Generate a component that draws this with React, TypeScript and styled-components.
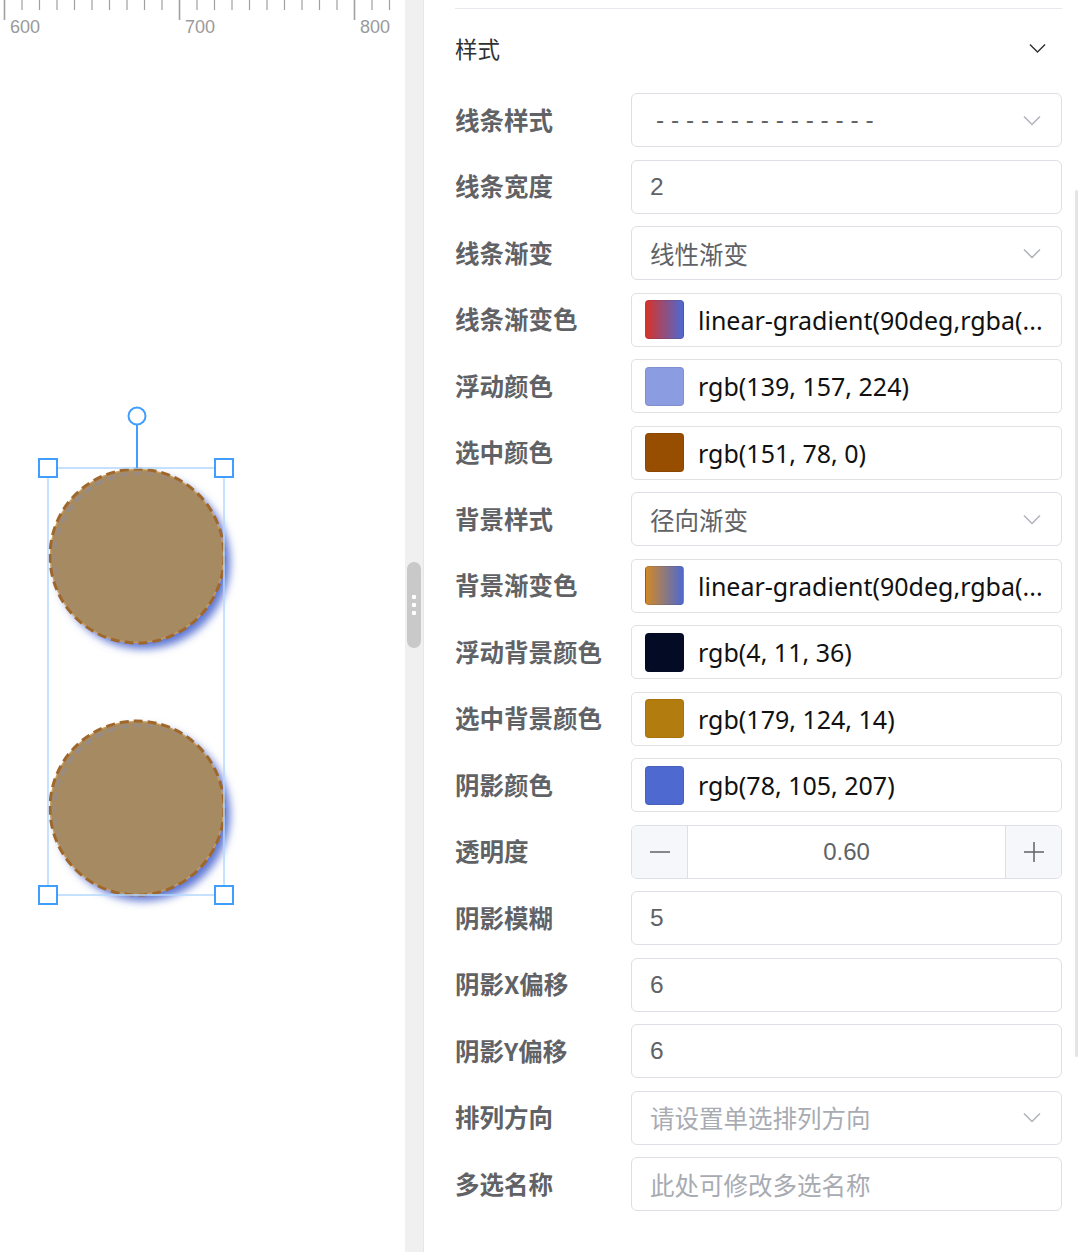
import React from "react";
import styled, { createGlobalStyle } from "styled-components";

const Global = createGlobalStyle`
  html, body { margin: 0; padding: 0; background: #fff; }
  body { font-family: "Liberation Sans", "Noto Sans CJK SC", sans-serif; }
  * { box-sizing: border-box; }
`;

const Page = styled.div`
  display: flex;
  width: 1079px;
  height: 1252px;
  overflow: hidden;
`;

const CanvasCol = styled.div`
  width: 405px;
  flex-shrink: 0;
  display: flex;
  flex-direction: column;
  background: #fff;
`;

const Stage = styled.div`
  position: relative;
  flex: 1;
`;

const ShapesLayer = styled.svg`
  position: absolute;
  left: 0;
  top: 0;
`;

const Splitter = styled.div`
  width: 19px;
  flex-shrink: 0;
  background: #f0f0f0;
  border-right: 1px solid #e6e6e6;
  display: flex;
  align-items: center;
  justify-content: center;
  padding-bottom: 42px;
`;

const Grip = styled.div`
  width: 14px;
  height: 86px;
  border-radius: 7px;
  background: #c9c9c9;
  display: flex;
  flex-direction: column;
  align-items: center;
  justify-content: center;
  gap: 4px;
`;

const GripDot = styled.span`
  width: 4px;
  height: 4px;
  border-radius: 1px;
  background: #fff;
`;

const Panel = styled.div`
  flex: 1;
  min-width: 0;
  display: flex;
  background: #fff;
`;

const PanelBody = styled.div`
  flex: 1;
  min-width: 0;
  padding: 8px 13px 0 31px;
`;

const ScrollTrack = styled.div`
  width: 4px;
  flex-shrink: 0;
  padding-top: 190px;
`;

const ScrollThumb = styled.div`
  width: 3px;
  height: 867px;
  background: #e4e4e4;
  border-radius: 2px;
`;

const SectionRule = styled.div`
  height: 1px;
  background: #e6e8ee;
`;

const SectionHeader = styled.div`
  height: 84px;
  display: flex;
  align-items: center;
  justify-content: space-between;
  padding: 0 16px 6px 0;
  font-family: "Noto Sans CJK SC", sans-serif;
  font-size: 22.5px;
  color: #303133;
`;

const Row = styled.div`
  display: flex;
  align-items: center;
  height: 54px;
  margin-bottom: 12.5px;
`;

const Label = styled.div`
  width: 176px;
  flex-shrink: 0;
  font-family: "Noto Sans CJK SC", sans-serif;
  font-weight: 700;
  font-size: 24.5px;
  color: #606266;
  padding-bottom: 2px;
`;

const Field = styled.div<{ $muted?: boolean }>`
  flex: 1;
  height: 54px;
  border: 1.5px solid #dcdfe6;
  border-radius: 6px;
  display: flex;
  align-items: center;
  padding: 0 20px 0 18px;
  font-family: "Liberation Sans", "Noto Sans CJK SC", sans-serif;
  font-size: 24.5px;
  color: ${(p) => (p.$muted ? "#a8abb2" : "#606266")};
  min-width: 0;
`;

const FieldText = styled.span<{ $indent?: number }>`
  flex: 1;
  padding-left: ${(p) => p.$indent ?? 0}px;
  white-space: nowrap;
  overflow: hidden;
  text-overflow: ellipsis;
`;

const ColorField = styled.div`
  flex: 1;
  height: 54px;
  border: 1.5px solid #e1e1e1;
  border-radius: 5px;
  display: flex;
  align-items: center;
  gap: 14px;
  padding: 0 12px 0 13px;
  min-width: 0;
`;

const Swatch = styled.div`
  width: 39px;
  height: 39px;
  border-radius: 4px;
  flex-shrink: 0;
  border: 1px solid rgba(0, 0, 0, 0.08);
`;

const ColorText = styled.span`
  flex: 1;
  min-width: 0;
  font-family: "Noto Sans", "Open Sans", sans-serif;
  font-size: 25px;
  color: #111;
  white-space: nowrap;
  overflow: hidden;
`;

const Stepper = styled.div`
  flex: 1;
  height: 54px;
  border: 1.5px solid #dcdfe6;
  border-radius: 6px;
  display: flex;
  overflow: hidden;
`;

const StepBtn = styled.div<{ $side: "l" | "r" }>`
  width: 56px;
  flex-shrink: 0;
  background: #f5f7fa;
  display: flex;
  align-items: center;
  justify-content: center;
  ${(p) => (p.$side === "l" ? "border-right: 1.5px solid #dcdfe6;" : "border-left: 1.5px solid #dcdfe6;")}
`;

const StepValue = styled.div`
  flex: 1;
  display: flex;
  align-items: center;
  justify-content: center;
  font-family: "Liberation Sans", sans-serif;
  font-size: 24px;
  color: #606266;
`;

const Chevron = ({ color, size = 18 }: { color: string; size?: number }) => (
  <svg width={size} height={size / 2 + 2} viewBox="0 0 18 11" fill="none">
    <path d="M1 1.5 L9 9.5 L17 1.5" stroke={color} strokeWidth="1.5" strokeLinejoin="round" />
  </svg>
);

const Ruler = () => {
  const ticks: React.ReactNode[] = [];
  for (let i = 0; i < 24; i++) {
    const x = 4.5 + i * 17.5;
    const major = i % 10 === 0;
    ticks.push(
      <line key={i} x1={x} x2={x} y1={0} y2={major ? 20 : 10} stroke="#a0a0a0" strokeWidth={major ? 1.6 : 1.2} />
    );
  }
  return (
    <svg width={405} height={40} style={{ display: "block" }}>
      {ticks}
      {[600, 700, 800].map((v, i) => (
        <text
          key={v}
          x={10 + i * 175}
          y={33}
          fontFamily="Liberation Sans, sans-serif"
          fontSize={18}
          fill="#9a9a9a"
        >
          {v}
        </text>
      ))}
    </svg>
  );
};

const Shapes = () => {
  const oy = -40;
  const circles = [556, 808];
  const handles: [number, number][] = [
    [48, 468],
    [224, 468],
    [48, 895],
    [224, 895],
  ];
  return (
    <ShapesLayer width={405} height={1212} viewBox={`0 ${-oy} 405 1212`}>
      <defs>
        <filter id="sh" x="-30%" y="-30%" width="160%" height="160%">
          <feDropShadow dx="6" dy="6" stdDeviation="4" floodColor="rgb(78,105,207)" floodOpacity="0.9" />
        </filter>
        <linearGradient id="inner" x1="0" y1="0" x2="1" y2="1">
          <stop offset="0" stopColor="#8c8ca6" stopOpacity="0.9" />
          <stop offset="0.45" stopColor="#8c8ca6" stopOpacity="0" />
        </linearGradient>
      </defs>
      {circles.map((cy) => (
        <g key={cy}>
          <circle cx={137} cy={cy} r={87} fill="#a68a62" filter="url(#sh)" />
          <circle cx={137} cy={cy} r={86.5} fill="none" stroke="#d1a45a" strokeWidth={1.5} opacity={0.7} />
          <circle cx={138.5} cy={cy + 1.5} r={84} fill="none" stroke="url(#inner)" strokeWidth={3} strokeDasharray="8 5" />
          <circle cx={137} cy={cy} r={87} fill="none" stroke="#9f672b" strokeWidth={3} strokeDasharray="9 5" />
        </g>
      ))}
      <rect x={48} y={468} width={176} height={427} fill="none" stroke="#b3d8ff" strokeWidth={1.5} />
      <line x1={137} x2={137} y1={425} y2={468} stroke="#409eff" strokeWidth={2} />
      <circle cx={137} cy={416} r={8.5} fill="#fff" stroke="#409eff" strokeWidth={2} />
      {handles.map(([x, y]) => (
        <rect key={`${x}-${y}`} x={x - 9} y={y - 9} width={18} height={18} fill="#fff" stroke="#409eff" strokeWidth={2} />
      ))}
    </ShapesLayer>
  );
};

type RowDef =
  | { label: string; kind: "select"; value: string; muted?: boolean; dashed?: boolean }
  | { label: string; kind: "input"; value: string; muted?: boolean }
  | { label: string; kind: "color"; value: string; swatch: string }
  | { label: string; kind: "stepper"; value: string };

const rows: RowDef[] = [
  { label: "线条样式", kind: "select", value: "- - - - - - - - - - - - - - -", dashed: true },
  { label: "线条宽度", kind: "input", value: "2" },
  { label: "线条渐变", kind: "select", value: "线性渐变" },
  {
    label: "线条渐变色",
    kind: "color",
    value: "linear-gradient(90deg,rgba(...",
    swatch: "linear-gradient(90deg, #d6342a 0%, #4e69cf 100%)",
  },
  { label: "浮动颜色", kind: "color", value: "rgb(139, 157, 224)", swatch: "rgb(139, 157, 224)" },
  { label: "选中颜色", kind: "color", value: "rgb(151, 78, 0)", swatch: "rgb(151, 78, 0)" },
  { label: "背景样式", kind: "select", value: "径向渐变" },
  {
    label: "背景渐变色",
    kind: "color",
    value: "linear-gradient(90deg,rgba(...",
    swatch: "linear-gradient(90deg, #d18928 0%, #4e69cf 100%)",
  },
  { label: "浮动背景颜色", kind: "color", value: "rgb(4, 11, 36)", swatch: "rgb(4, 11, 36)" },
  { label: "选中背景颜色", kind: "color", value: "rgb(179, 124, 14)", swatch: "rgb(179, 124, 14)" },
  { label: "阴影颜色", kind: "color", value: "rgb(78, 105, 207)", swatch: "rgb(78, 105, 207)" },
  { label: "透明度", kind: "stepper", value: "0.60" },
  { label: "阴影模糊", kind: "input", value: "5" },
  { label: "阴影X偏移", kind: "input", value: "6" },
  { label: "阴影Y偏移", kind: "input", value: "6" },
  { label: "排列方向", kind: "select", value: "请设置单选排列方向", muted: true },
  { label: "多选名称", kind: "input", value: "此处可修改多选名称", muted: true },
];

const renderControl = (r: RowDef) => {
  switch (r.kind) {
    case "select":
      return (
        <Field $muted={r.muted}>
          <FieldText $indent={r.dashed ? 6 : 0}>{r.value}</FieldText>
          <Chevron color="#b0b3ba" />
        </Field>
      );
    case "input":
      return (
        <Field $muted={r.muted}>
          <FieldText>{r.value}</FieldText>
        </Field>
      );
    case "color":
      return (
        <ColorField>
          <Swatch style={{ background: r.swatch }} />
          <ColorText>{r.value}</ColorText>
        </ColorField>
      );
    case "stepper":
      return (
        <Stepper>
          <StepBtn $side="l">
            <svg width="20" height="2" viewBox="0 0 20 2">
              <line x1="0" y1="1" x2="20" y2="1" stroke="#606266" strokeWidth="1.5" />
            </svg>
          </StepBtn>
          <StepValue>{r.value}</StepValue>
          <StepBtn $side="r">
            <svg width="20" height="20" viewBox="0 0 20 20">
              <line x1="0" y1="10" x2="20" y2="10" stroke="#606266" strokeWidth="1.5" />
              <line x1="10" y1="0" x2="10" y2="20" stroke="#606266" strokeWidth="1.5" />
            </svg>
          </StepBtn>
        </Stepper>
      );
  }
};

export default function App() {
  return (
    <>
      <Global />
      <Page>
        <CanvasCol>
          <Ruler />
          <Stage>
            <Shapes />
          </Stage>
        </CanvasCol>
        <Splitter>
          <Grip>
            <GripDot />
            <GripDot />
            <GripDot />
          </Grip>
        </Splitter>
        <Panel>
          <PanelBody>
            <SectionRule />
            <SectionHeader>
              <span>样式</span>
              <Chevron color="#303133" size={17} />
            </SectionHeader>
            {rows.map((r) => (
              <Row key={r.label}>
                <Label>{r.label}</Label>
                {renderControl(r)}
              </Row>
            ))}
          </PanelBody>
          <ScrollTrack>
            <ScrollThumb />
          </ScrollTrack>
        </Panel>
      </Page>
    </>
  );
}
